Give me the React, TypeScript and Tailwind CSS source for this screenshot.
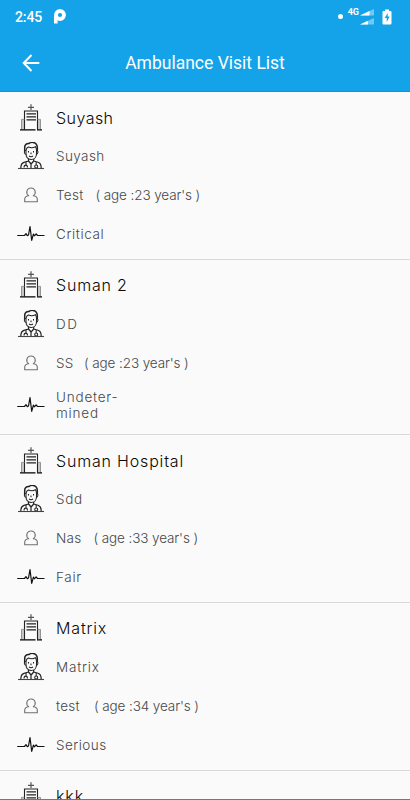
import type { ReactNode } from 'react';

type VisitDetails = {
  doctor: string;
  doctorSpacing: string;
  patient: string;
  patientWidth: string;
  age: number;
  status: string[];
  statusSpacing: string;
};

type Visit = {
  hospital: string;
  hospitalSpacing: string;
  details?: VisitDetails;
};

const visits: Visit[] = [
  {
    hospital: 'Suyash',
    hospitalSpacing: 'tracking-[0.45px]',
    details: { doctor: 'Suyash', doctorSpacing: 'tracking-[0.4px]', patient: 'Test', patientWidth: 'w-[39.5px]', age: 23, status: ['Critical'], statusSpacing: 'tracking-[0.6px]' },
  },
  {
    hospital: 'Suman 2',
    hospitalSpacing: 'tracking-[0.8px]',
    details: { doctor: 'DD', doctorSpacing: 'tracking-[1.6px]', patient: 'SS', patientWidth: 'w-[28px]', age: 23, status: ['Undeter-', 'mined'], statusSpacing: 'tracking-[0.8px]' },
  },
  {
    hospital: 'Suman Hospital',
    hospitalSpacing: 'tracking-[0.82px]',
    details: { doctor: 'Sdd', doctorSpacing: 'tracking-[0.7px]', patient: 'Nas', patientWidth: 'w-[37.5px]', age: 33, status: ['Fair'], statusSpacing: 'tracking-[0.7px]' },
  },
  {
    hospital: 'Matrix',
    hospitalSpacing: 'tracking-[0.85px]',
    details: { doctor: 'Matrix', doctorSpacing: 'tracking-[0.8px]', patient: 'test', patientWidth: 'w-[38px]', age: 34, status: ['Serious'], statusSpacing: 'tracking-[0.45px]' },
  },
  { hospital: 'kkk', hospitalSpacing: 'tracking-[0.9px]' },
];

const iconClass = 'h-7 w-7 shrink-0';

function HospitalIcon() {
  return (
    <svg viewBox="0 0 28 28" className={iconClass} fill="none">
      <path d="M14 .3v5.8M11 3.4h6" stroke="#555" strokeWidth="1.2" />
      <path d="M7.500 25.500V7h13v18.500" stroke="#222" strokeWidth="1.1" />
      <path d="M9.500 9.900h9.500M9.500 12.900h9.500M9.500 15.900h9.500" stroke="#222" strokeWidth="1.1" />
      <path d="M4.500 25.500V15.400h3M23.500 25.500V15.400h-3M6 16v9M22 16v9" stroke="#888" strokeWidth=".9" />
      <path d="M3 25.900h15.500M20 25.900h5" stroke="#000" strokeWidth="1.3" />
    </svg>
  );
}

function DoctorIcon() {
  return (
    <svg viewBox="0 0 28 28" className={iconClass} fill="none" stroke="#222" strokeWidth="1.05" strokeLinejoin="round">
      <path d="M7.7 9V5.200C7.700 2.600 9.600 1.500 11.800 1.600 14-.3 18.300 0 19.600 2.600c1.100 2 .8 4.400.6 6.400" strokeWidth="1.5" />
      <path d="M9 8.500c.3-2 1-3 2.400-3.400 2.600 1 5 .9 7-.5.9 1 1.100 2.200 1.100 3.900v3.200c0 3.600-2.400 5.800-5.400 5.800S9 15.200 9 11.600z" />
      <path d="M8.900 8.600c-2.200-.3-2 3.600.3 3.800M19.400 8.600c2.200-.3 2 3.600-.3 3.800" />
      <path d="M11.500 9v1.500M16.500 9v1.500M14 10.500v1.800M12 14c1.300.9 2.700.9 4 0" />
      <path d="M11.500 17v2L7 20.300c-2.300.7-3.200 2.700-3.200 5.700M16.700 17v2l4.300 1.300c2.300.7 3.200 2.700 3.200 5.700M11.500 19l2.600 3 2.600-3M14 22v4" strokeWidth="1.2" />
      <path d="M9 20v3.500M19.200 20v3M7 25.500c0-3.200 3.500-3.200 3.500 0m7.200-1a1.500 1.500 0 1 0 3 0 1.500 1.500 0 0 0-3 0" />
      <path d="M1 26.500h26" stroke="#444" strokeWidth="1.1" />
    </svg>
  );
}

function PatientIcon() {
  return (
    <svg viewBox="0 0 28 28" className={iconClass} fill="none" stroke="#707070" strokeWidth="1.1" strokeLinejoin="round">
      <path d="M11.700 14.700C8.500 12.700 9.400 7 14 7s5.500 5.700 2.300 7.700c2.900.2 4 1.400 4 3.600v2.400H7.700v-2.400c0-2.200 1.100-3.400 4-3.600z" />
    </svg>
  );
}

function PulseIcon() {
  return (
    <svg viewBox="0 0 28 28" className={iconClass} fill="none" stroke="#111" strokeWidth="1.2" strokeLinejoin="round">
      <path d="M.2 15.500h7.300l1.500-1.800 1.300 2 1.200-.7L13 6.500l1.700 13.800 1.700-6.200 1 1.700 1.700-2 1.400 1.700h7" />
    </svg>
  );
}

function Row({ icon, height = 'h-[38.75px]', children }: { icon: ReactNode; height?: string; children: ReactNode }) {
  return (
    <div className={`flex items-center gap-[11px] ${height}`}>
      {icon}
      {children}
    </div>
  );
}

function VisitRows({ details }: { details: VisitDetails }) {
  return (
    <>
      <Row icon={<DoctorIcon />}>
        <span className={details.doctorSpacing}>{details.doctor}</span>
      </Row>
      <Row icon={<PatientIcon />}>
        <span className="flex">
          <span className={`tracking-[0.3px] ${details.patientWidth}`}>{details.patient}</span>
          <span className="tracking-[-0.11px]">( age :{details.age} year's )</span>
        </span>
      </Row>
      <Row icon={<PulseIcon />} height={details.status.length > 1 ? 'h-[46.25px]' : 'h-[38.75px]'}>
        <span className={details.statusSpacing}>
          {details.status.map((line) => (
            <span key={line} className="block">{line}</span>
          ))}
        </span>
      </Row>
    </>
  );
}

function VisitCard({ visit }: { visit: Visit }) {
  return (
    <li className="shrink-0 border-b border-[#d9d9d9] pt-[6.25px] pb-[5.5px] pl-[17px] text-[13.5px] leading-4 font-light text-[#484848]">
      <Row icon={<HospitalIcon />}>
        <span className={`text-[16px] leading-5 text-[#080808] ${visit.hospitalSpacing}`}>{visit.hospital}</span>
      </Row>
      {visit.details && <VisitRows details={visit.details} />}
    </li>
  );
}

function StatusBar() {
  return (
    <div className="flex h-[33px] items-center justify-between pr-[18px] pl-[15px]">
      <div className="flex items-center gap-[12px]">
        <span className="text-[14px] leading-4 font-medium tracking-[-0.1px]">2:45</span>
        <svg viewBox="0 0 12 15" className="h-[15px] w-3" fill="none">
          <path d="M1.800 14.500V7" stroke="white" strokeWidth="3.6" />
          <circle cx="6" cy="6" r="4" stroke="white" strokeWidth="3.8" />
          <path d="M3.500 9.500v1.500" stroke="white" strokeWidth="2" />
        </svg>
      </div>
      <div className="flex items-center">
        <span className="mr-[5px] h-[5px] w-[5px] rounded-full bg-white" />
        <span className="mb-[9px] text-[9px] leading-[9px] font-bold">4G</span>
        <svg viewBox="0 0 14 18" className="ml-[1px] h-[18px] w-[14px]">
          <path d="M0 7.500 14 1v6.500zM0 16.500 14 10v6.500z" fill="white" opacity=".4" />
          <path d="M0 7.500 9.500 3v4.500zM0 16.500 8 12.800v3.700z" fill="white" />
        </svg>
        <svg viewBox="0 0 10 16" className="ml-[8px] h-4 w-[10px]">
          <path d="M3 .5h4V2h1.500q1 0 1 1v11.500q0 1-1 1h-7q-1 0-1-1V3q0-1 1-1H3z" fill="white" />
          <path d="M5.800 4 2.700 9h2v4l3-5.500h-2z" fill="#14a3e8" />
        </svg>
      </div>
    </div>
  );
}

export default function App() {
  return (
    <div className="flex h-[800px] w-[410px] flex-col overflow-hidden border-b border-[#777] bg-[#fafafa] font-['Inter','Liberation_Sans',sans-serif]">
      <header className="h-[92px] shrink-0 border-b border-[#1193d3] bg-[#14a3e8] font-['Roboto',sans-serif] text-white">
        <StatusBar />
        <div className="grid h-[59px] grid-cols-[62px_1fr_62px] items-center">
          <svg viewBox="0 0 18 18" className="ml-[22px] h-[18px] w-[18px]" fill="none" stroke="white" strokeWidth="2">
            <path d="M9.500 1 1.700 9l7.800 8M1.700 9h15.600" />
          </svg>
          <h1 className="pt-px text-center text-[17.5px] leading-6 font-normal">Ambulance Visit List</h1>
        </div>
      </header>
      <ul className="flex min-h-0 flex-1 flex-col overflow-hidden">
        {visits.map((visit) => (
          <VisitCard key={visit.hospital} visit={visit} />
        ))}
      </ul>
    </div>
  );
}
